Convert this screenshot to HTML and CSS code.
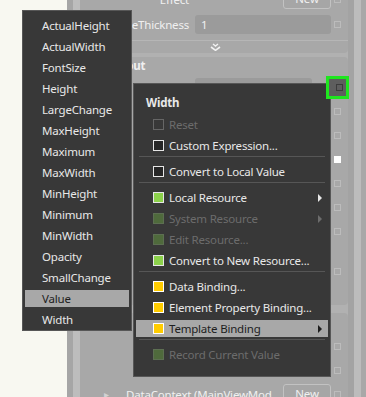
FILE: index.html
```html
<!DOCTYPE html>
<html>

<head>
  <title>Propiedades - Width</title>
  <link rel="stylesheet" href="styles.css">
</head>

<body>
  <div class="page">
    <div class="gutter"></div>
    <div class="panel">
      <div class="rail rail-a"></div>
      <div class="rail rail-b"></div>
      <div class="rail rail-c"></div>

      <div class="content">
        <!-- Apariencia -->
        <section class="group group-top">
          <div class="row row-short">
            <span class="label">Effect</span>
            <span class="value value-end"><span class="btn">New</span></span>
            <i class="adv"></i>
          </div>
          <div class="row row-field">
            <span class="label">StrokeThickness</span>
            <span class="value"><span class="field">1</span></span>
            <i class="adv"></i>
          </div>
          <div class="divider"></div>
          <div class="expander">
            <svg width="11" height="8" viewBox="0 0 11 8">
              <polyline points="3,1 5.5,3 8,1" fill="none" stroke="#f2f2f2" stroke-width="1.4" />
              <polyline points="1,4 5.5,7.3 10,4" fill="none" stroke="#f2f2f2" stroke-width="1.6" />
            </svg>
          </div>
        </section>

        <!-- Layout: las filas quedan tapadas por los menus -->
        <section class="group group-layout">
          <div class="group-head">Layout</div>
          <div class="row">
            <span class="label"></span>
            <span class="value"><span class="field field-short"></span></span>
            <i class="adv"></i>
          </div>
          <div class="row">
            <span class="label"></span>
            <span class="value"></span>
            <i class="adv"></i>
          </div>
          <div class="row">
            <span class="label"></span>
            <span class="value"></span>
            <i class="adv"></i>
          </div>
          <div class="row">
            <span class="label"></span>
            <span class="value"></span>
            <i class="adv adv-set"></i>
          </div>
          <div class="row">
            <span class="label"></span>
            <span class="value"></span>
            <i class="adv"></i>
          </div>
          <div class="row">
            <span class="label"></span>
            <span class="value"></span>
            <i class="adv"></i>
          </div>
          <div class="row">
            <span class="label"></span>
            <span class="value"></span>
            <i class="adv"></i>
          </div>
          <div class="row row-tall">
            <span class="label"></span>
            <span class="value"></span>
            <i class="adv"></i>
          </div>
        </section>

        <!-- Propiedades comunes -->
        <section class="group group-common">
          <div class="group-head"></div>
          <div class="row">
            <span class="label"></span>
            <span class="value"></span>
            <i class="adv"></i>
          </div>
          <div class="row">
            <span class="label"></span>
            <span class="value"></span>
            <i class="adv"></i>
          </div>
          <div class="row row-wide">
            <span class="twisty">&#9656;</span>
            <span class="label-wide">DataContext (MainViewModel)</span>
            <span class="btn">New</span>
            <i class="adv"></i>
          </div>
        </section>
      </div>

      <div class="rail rail-d"></div>
      <div class="rail rail-e"></div>
      <div class="rail rail-f"></div>
    </div>
  </div>

  <!-- Lista de propiedades -->
  <div class="menu prop-menu">
    <div class="prop-item">ActualHeight</div>
    <div class="prop-item">ActualWidth</div>
    <div class="prop-item">FontSize</div>
    <div class="prop-item">Height</div>
    <div class="prop-item">LargeChange</div>
    <div class="prop-item">MaxHeight</div>
    <div class="prop-item">Maximum</div>
    <div class="prop-item">MaxWidth</div>
    <div class="prop-item">MinHeight</div>
    <div class="prop-item">Minimum</div>
    <div class="prop-item">MinWidth</div>
    <div class="prop-item">Opacity</div>
    <div class="prop-item">SmallChange</div>
    <div class="prop-item active">Value</div>
    <div class="prop-item">Width</div>
  </div>

  <!-- Menu de opciones avanzadas -->
  <div class="menu ctx-menu">
    <div class="ctx-head">Width</div>
    <div class="ctx-item disabled"><i class="check"></i>Reset</div>
    <div class="ctx-item"><i class="check"></i>Custom Expression...</div>
    <div class="ctx-sep"></div>
    <div class="ctx-item"><i class="check"></i>Convert to Local Value</div>
    <div class="ctx-sep"></div>
    <div class="ctx-item"><i class="check green"></i>Local Resource<b class="sub"></b></div>
    <div class="ctx-item disabled"><i class="check green"></i>System Resource<b class="sub"></b></div>
    <div class="ctx-item disabled"><i class="check green"></i>Edit Resource...</div>
    <div class="ctx-item"><i class="check green"></i>Convert to New Resource...</div>
    <div class="ctx-sep"></div>
    <div class="ctx-item"><i class="check gold"></i>Data Binding...</div>
    <div class="ctx-item"><i class="check gold"></i>Element Property Binding...</div>
    <div class="ctx-item active"><i class="check gold"></i>Template Binding<b class="sub"></b></div>
    <div class="ctx-sep"></div>
    <div class="ctx-item disabled"><i class="check green"></i>Record Current Value</div>
  </div>

  <div class="focus-ring"><i></i></div>
</body>

</html>
```

FILE: styles.css
```css
body {
  margin: 0;
  width: 366px;
  height: 397px;
  overflow: hidden;
  position: relative;
  background-color: #f8f8f1;
  font-family: "Noto Sans", "Open Sans", sans-serif;
  font-size: 11.5px;
  letter-spacing: -0.2px;
  color: #f0f0f0;
}

/* Fondo: panel de propiedades */
.page {
  display: flex;
  height: 397px;
}

.gutter {
  width: 67px;
  flex: none;
}

.panel {
  flex: 1;
  display: flex;
  background-color: #ababab;
}

.rail {
  flex: none;
}

.rail-a { width: 6px; background-color: #a6a6a6; }
.rail-b { width: 7px; background-color: #bdbdbd; }
.rail-c { width: 7px; background-color: #a8a8a8; }
.rail-d { width: 6px; background-color: #a3a3a3; }
.rail-e { width: 7px; background-color: #bcbcbc; }
.rail-f { width: 5px; background-color: #a8a8a8; }

.content {
  width: 261px;
  display: flex;
  flex-direction: column;
  background-color: #b1b1b1;
}

.group {
  background-color: #a8a8a8;
  border-radius: 4px;
}

.group-top {
  margin-top: -13px;
}

.group-layout {
  margin-top: 4px;
  padding-bottom: 6px;
}

.group-common {
  margin-top: 8px;
  flex: 1;
}

.group-head {
  height: 18px;
  line-height: 18px;
  padding-left: 20px;
  font-weight: bold;
}

.group-common .group-head {
  height: 21px;
  line-height: 21px;
}

.row {
  height: 24px;
  display: flex;
  align-items: center;
}

.row-field {
  height: 26px;
}

.row-tall {
  height: 56px;
}

.label {
  width: 105px;
  flex: none;
  text-align: right;
  padding-right: 3px;
  box-sizing: border-box;
  white-space: nowrap;
  overflow: hidden;
}

.value {
  width: 136px;
  margin-left: 3px;
  display: flex;
}

.value-end {
  justify-content: flex-end;
}

.field {
  flex: 1;
  height: 19px;
  line-height: 19px;
  padding-left: 6px;
  background-color: #9b9b9b;
  border-radius: 3px;
}

.field-short {
  flex: none;
  width: 111px;
}

.btn {
  width: 46px;
  height: 18px;
  line-height: 18px;
  text-align: center;
  border: 1px solid #c2c2c2;
  border-radius: 3px;
  background-color: #a6a6a6;
}

.adv {
  width: 7px;
  height: 7px;
  margin-left: 3px;
  box-sizing: border-box;
  border: 1px solid #bcbcbc;
  flex: none;
}

.adv-set {
  background-color: #ffffff;
  border-color: #ffffff;
}

.divider {
  height: 1px;
  margin-top: 3px;
  background-color: #b6b6b6;
}

.expander {
  height: 12px;
  display: flex;
  justify-content: center;
  align-items: center;
  padding-right: 4px;
}

.row-wide {
  padding-right: 7px;
}

.twisty {
  width: 18px;
  margin-left: 17px;
  color: #d2d2d2;
  font-size: 10px;
}

.label-wide {
  width: 146px;
  white-space: nowrap;
  overflow: hidden;
  margin-left: 4px;
}

.row-wide .btn {
  margin-left: auto;
}

/* Menus flotantes */
.menu {
  position: absolute;
  display: flex;
  flex-direction: column;
  background-color: #383838;
  border: 1px solid #575757;
  color: #e8e8e8;
  box-sizing: border-box;
}

.prop-menu {
  left: 22px;
  top: 10px;
  width: 110px;
  padding-top: 4px;
}

.prop-item {
  height: 17px;
  line-height: 17px;
  margin: 2px;
  padding-left: 17px;
}

.prop-item.active {
  background-color: #a8a8a8;
  color: #1e1e1e;
}

.ctx-menu {
  left: 133px;
  top: 83px;
  width: 198px;
  padding: 8px 0 11px;
}

.ctx-head {
  height: 22px;
  line-height: 22px;
  padding-left: 12px;
  font-weight: bold;
}

.ctx-item {
  height: 17px;
  margin: 2px;
  padding-left: 17px;
  display: flex;
  align-items: center;
  white-space: nowrap;
}

.ctx-item.disabled {
  color: #6c6c6c;
}

.ctx-item.active {
  background-color: #a8a8a8;
  color: #1e1e1e;
}

.ctx-sep {
  height: 1px;
  margin: 0 5px 4px;
  background-color: #565656;
}

.check {
  width: 11px;
  height: 11px;
  margin-right: 5px;
  box-sizing: border-box;
  border: 1px solid #e6e6e6;
  background-color: #262626;
  flex: none;
}

.disabled .check {
  border-color: #666666;
  background-color: transparent;
}

.check.green {
  background-color: #8cd14b;
}

.disabled .check.green {
  border-color: #5d6f52;
  background-color: #4f6a3c;
}

.check.gold {
  background-color: #ffcc00;
  border-color: #ffffff;
}

.sub {
  margin-left: auto;
  margin-right: 6px;
  width: 0;
  height: 0;
  border-top: 4px solid transparent;
  border-bottom: 4px solid transparent;
  border-left: 4px solid #e8e8e8;
}

.disabled .sub {
  border-left-color: #6c6c6c;
}

.active .sub {
  border-left-color: #1e1e1e;
}

/* Marca verde sobre el boton avanzado */
.focus-ring {
  position: absolute;
  left: 326px;
  top: 76px;
  width: 23px;
  height: 23px;
  box-sizing: border-box;
  border: 3px solid #1fe61f;
  background-color: #5e5e5e;
  display: flex;
  align-items: center;
  justify-content: center;
}

.focus-ring i {
  width: 7px;
  height: 7px;
  margin-left: 4px;
  box-sizing: border-box;
  border: 1px solid #3c3c3c;
}
```
